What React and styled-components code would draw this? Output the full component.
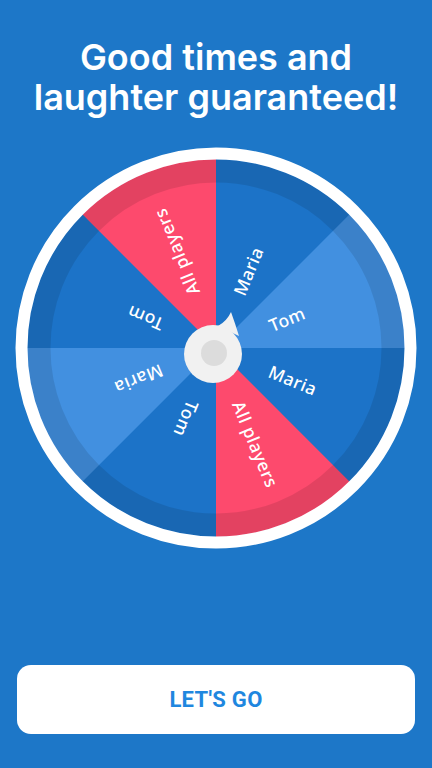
import React from "react";
import styled, { createGlobalStyle } from "styled-components";

const GlobalStyle = createGlobalStyle`
  html, body {
    margin: 0;
    padding: 0;
    background: #1d77c8;
  }
  * {
    box-sizing: border-box;
  }
`;

const Page = styled.div`
  min-height: 100vh;
  display: flex;
  flex-direction: column;
  align-items: center;
  padding: 37px 17px 34px;
  background: #1d77c8;
`;

const Title = styled.h1`
  margin: 0;
  font-family: Inter, "Noto Sans", sans-serif;
  font-weight: 600;
  font-size: 36px;
  line-height: 40px;
  color: #ffffff;
  text-align: center;
`;

const WheelBox = styled.div`
  margin-top: 29px;
  width: 404px;
  height: 404px;
  flex-shrink: 0;
`;

const Button = styled.button`
  margin-top: auto;
  width: 100%;
  height: 69px;
  border: none;
  border-radius: 14px;
  background: #ffffff;
  color: #1f87df;
  font-family: Roboto, "Liberation Sans", sans-serif;
  font-weight: 700;
  font-size: 22px;
  letter-spacing: 0.3px;
  cursor: pointer;
`;

const C = 202;
const SEG_R = 189;

const segments = [
  { label: "Maria", color: "#1c73c8" },
  { label: "Tom", color: "#4290e0" },
  { label: "Maria", color: "#1c73c8" },
  { label: "All players", color: "#fd4a6d" },
  { label: "Tom", color: "#1c73c8" },
  { label: "Maria", color: "#4290e0" },
  { label: "Tom", color: "#1c73c8" },
  { label: "All players", color: "#fd4a6d" },
];

const pt = (deg, r) => {
  const a = (deg * Math.PI) / 180;
  return [C + r * Math.sin(a), C - r * Math.cos(a)];
};

// one 45deg slice, counted clockwise from the top
const slicePath = (i) => {
  const [x0, y0] = pt(i * 45, SEG_R);
  const [x1, y1] = pt((i + 1) * 45, SEG_R);
  return `M${C} ${C} L${x0} ${y0} A${SEG_R} ${SEG_R} 0 0 1 ${x1} ${y1} Z`;
};

const Wheel = () => (
  <svg width="404" height="404" viewBox="0 0 404 404">
    {segments.map((s, i) => (
      <path key={i} d={slicePath(i)} fill={s.color} />
    ))}
    <circle cx={C} cy={C} r="177" fill="none" stroke="rgba(0,0,0,0.1)" strokeWidth="23" />
    <circle cx={C} cy={C} r="194.5" fill="none" stroke="#ffffff" strokeWidth="12" />
    {segments.map((s, i) => (
      <text
        key={"t" + i}
        x={C + 58}
        y={C}
        dominantBaseline="central"
        transform={`rotate(${i * 45 + 22.5 - 90} ${C} ${C})`}
        fill="#ffffff"
        fontFamily="'Noto Sans', sans-serif"
        fontWeight="500"
        fontSize="17.5"
        letterSpacing="0.5"
      >
        {s.label}
      </text>
    ))}
    <path d="M204 180 Q213 175 217 166 Q221 177 225 190 Z" fill="#f1f1f1" />
    <circle cx={C - 3} cy={C + 6} r="29" fill="#f1f1f1" />
    <circle cx={C - 2} cy={C + 5} r="13" fill="#dcdcdc" />
  </svg>
);

export default function App() {
  return (
    <>
      <GlobalStyle />
      <Page>
        <Title>
          Good times and
          <br />
          laughter guaranteed!
        </Title>
        <WheelBox>
          <Wheel />
        </WheelBox>
        <Button>LET'S GO</Button>
      </Page>
    </>
  );
}
